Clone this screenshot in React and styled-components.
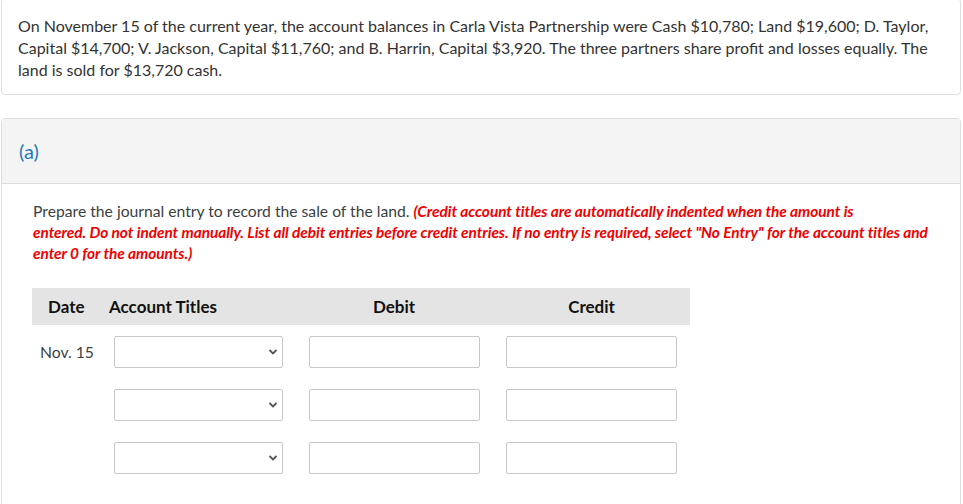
import React from "react";
import styled, { createGlobalStyle } from "styled-components";

const GlobalStyle = createGlobalStyle`
  body {
    margin: 0;
    background: #ffffff;
    font-family: Lato, "Noto Sans", sans-serif;
    color: #333333;
  }
`;

const Page = styled.div`
  padding: 0 2px 0 1px;
`;

const Card = styled.section`
  border: 1px solid #dedede;
  border-radius: 4px;
  background: #fff;
  margin-bottom: 23px;
`;

const IntroCard = styled(Card)`
  margin-top: -2px;
  padding: 16px 16px 13px;
`;

const Text = styled.p`
  margin: 0;
  font-size: 16px;
  line-height: 22px;
  color: #333;
`;

const PartHeader = styled.div`
  background: #f4f4f4;
  border-bottom: 1px solid #dcdcdc;
  height: 64px;
  display: flex;
  align-items: center;
  padding: 0 16px;
`;

const PartLabel = styled.h2`
  margin: 0;
  font-size: 20px;
  font-weight: 400;
  color: #1d7ab9;
  padding-left: 1px;
`;

const PartBody = styled.div`
  padding: 17px 26px 40px 30px;
`;

const Prompt = styled.p`
  margin: 0;
  font-size: 15.7px;
  line-height: 21px;
  color: #3a3f44;
  padding-left: 1px;
  white-space: nowrap;
`;

const Note = styled.em`
  color: #f00000;
  font-weight: 700;
  font-size: 15.4px;
  letter-spacing: -0.04px;
`;

const Journal = styled.div`
  margin-top: 24px;
  width: 658px;
  display: grid;
  grid-template-columns: 68px 195px 198px 197px;
  row-gap: 21px;
`;

const HeadCell = styled.div`
  background: #e4e4e4;
  height: 37px;
  display: flex;
  align-items: center;
  justify-content: ${(p) => (p.$center ? "center" : "flex-start")};
  padding-left: ${(p) => p.$pad || 0}px;
  font-size: 17px;
  font-weight: 700;
  color: #111;
  margin-bottom: -10px;
`;

const DateCell = styled.div`
  height: 32px;
  display: flex;
  align-items: center;
  padding-left: 8px;
  font-size: 15.7px;
  color: #3a3f44;
`;

const Cell = styled.div`
  padding-left: ${(p) => p.$pad}px;
`;

const SelectWrap = styled.div`
  position: relative;
  width: 169px;
  height: 32px;
`;

const Select = styled.select`
  appearance: none;
  width: 100%;
  height: 100%;
  border: 1px solid #c8c8c8;
  border-radius: 2px;
  background: #fff;
  font-family: inherit;
  font-size: 15px;
  box-sizing: border-box;
`;

const Chevron = styled.svg`
  position: absolute;
  right: 5px;
  top: 13px;
  pointer-events: none;
`;

const Amount = styled.input`
  width: 171px;
  height: 32px;
  box-sizing: border-box;
  border: 1px solid #c8c8c8;
  border-radius: 2px;
  background: #fff;
  font-family: inherit;
  font-size: 15px;
`;

function AccountSelect() {
  return (
    <SelectWrap>
      <Select defaultValue="">
        <option value=""></option>
      </Select>
      <Chevron width="10" height="6" viewBox="0 0 10 6">
        <path d="M1.5 1 L5 4.5 L8.5 1" fill="none" stroke="#555" strokeWidth="1.8" />
      </Chevron>
    </SelectWrap>
  );
}

const rows = ["Nov. 15", "", ""];

export default function App() {
  return (
    <>
      <GlobalStyle />
      <Page>
        <IntroCard>
          <Text>
            On November 15 of the current year, the account balances in Carla Vista Partnership were Cash
            $10,780; Land $19,600; D. Taylor, Capital $14,700; V. Jackson, Capital $11,760; and B. Harrin,
            Capital $3,920. The three partners share profit and losses equally. The land is sold for $13,720
            cash.
          </Text>
        </IntroCard>

        <Card>
          <PartHeader>
            <PartLabel>(a)</PartLabel>
          </PartHeader>
          <PartBody>
            <Prompt>
              Prepare the journal entry to record the sale of the land.{" "}
              <Note>
                (Credit account titles are automatically indented when the amount is
                <br />
                entered. Do not indent manually. List all debit entries before credit entries. If no entry is
                required, select "No Entry" for the account titles and
                <br />
                enter 0 for the amounts.)
              </Note>
            </Prompt>

            <Journal>
              <HeadCell $pad={16}>Date</HeadCell>
              <HeadCell $pad={9}>Account Titles</HeadCell>
              <HeadCell $center>Debit</HeadCell>
              <HeadCell $center>Credit</HeadCell>
              {rows.map((d, i) => (
                <React.Fragment key={i}>
                  <DateCell>{d}</DateCell>
                  <Cell $pad={14}>
                    <AccountSelect />
                  </Cell>
                  <Cell $pad={14}>
                    <Amount type="text" />
                  </Cell>
                  <Cell $pad={13}>
                    <Amount type="text" />
                  </Cell>
                </React.Fragment>
              ))}
            </Journal>
          </PartBody>
        </Card>
      </Page>
    </>
  );
}
